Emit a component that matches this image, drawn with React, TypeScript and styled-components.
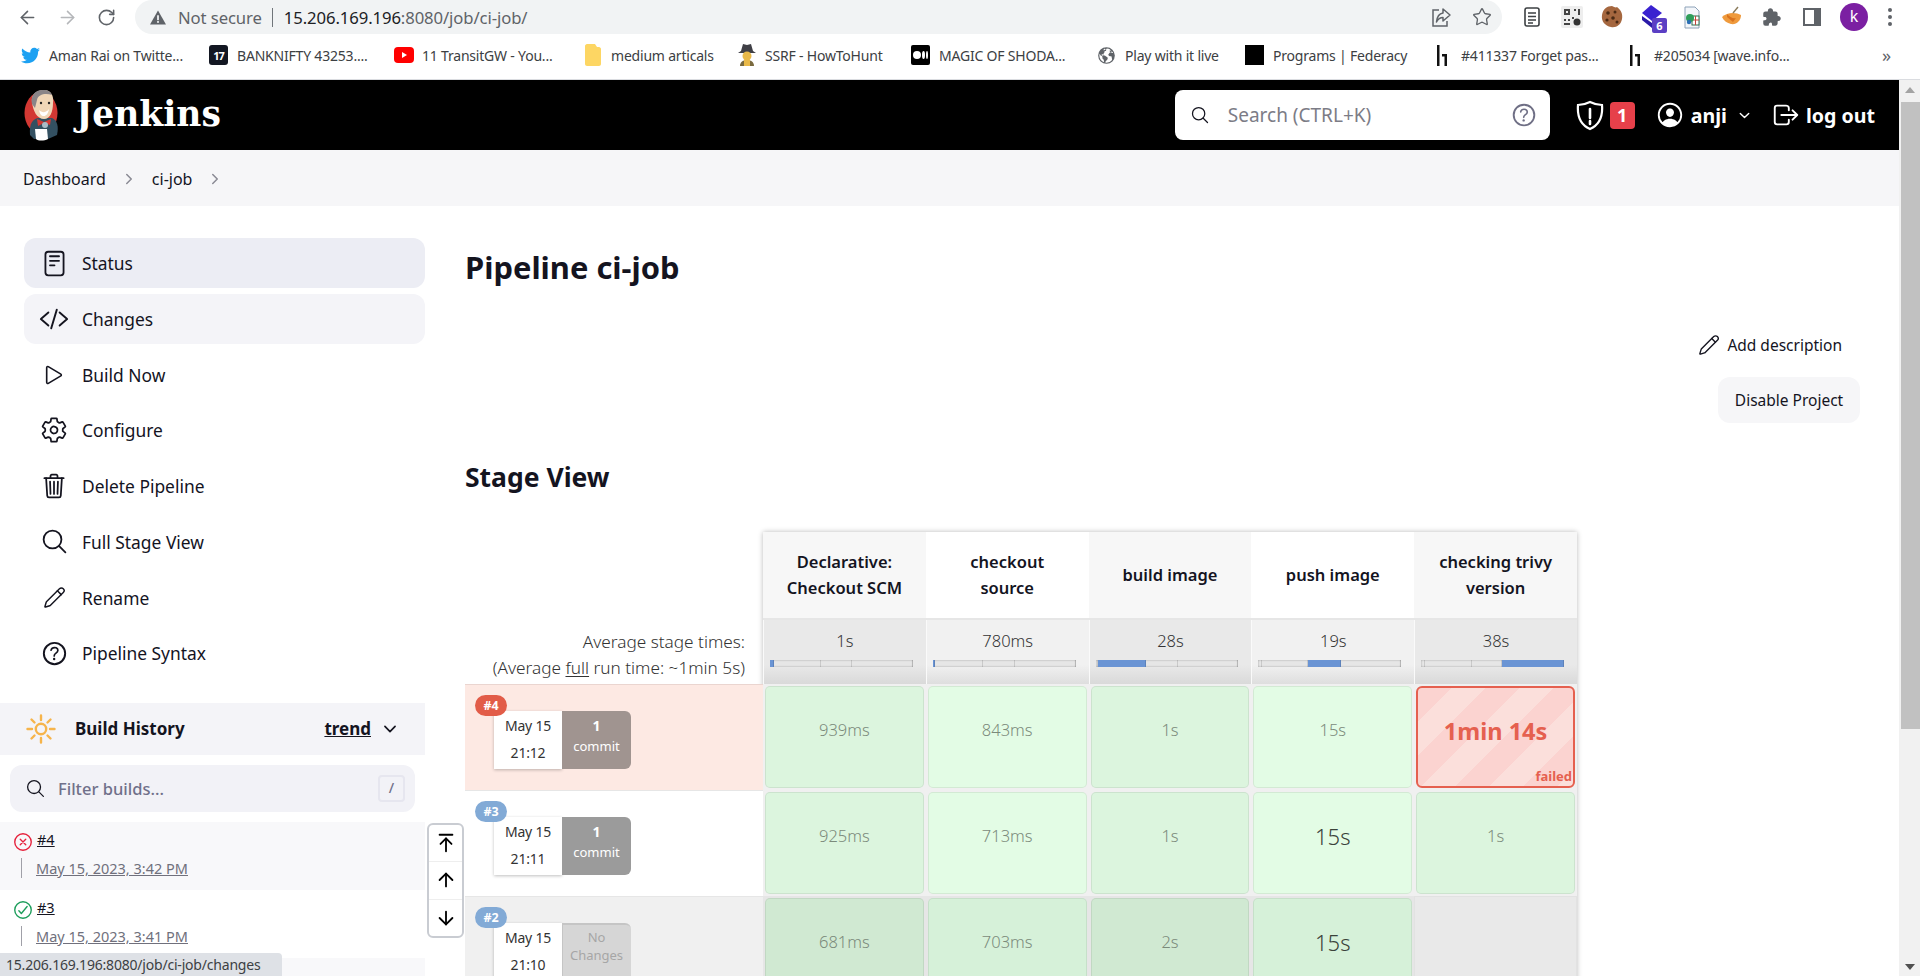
import React from "react";
import styled, { createGlobalStyle } from "styled-components";
import { ArrowDown, ArrowLeft, ArrowRight, ArrowUp, ArrowUpToLine, Pencil, RotateCw, Star } from "lucide-react";
import { FaTwitter } from "react-icons/fa";
import {
  IoCheckmarkCircleOutline,
  IoChevronDown,
  IoChevronForward,
  IoCloseCircleOutline,
  IoCodeSlashOutline,
  IoEarth,
  IoExtensionPuzzle,
  IoHelpCircleOutline,
  IoLogOutOutline,
  IoPersonCircleOutline,
  IoPlayOutline,
  IoReaderOutline,
  IoSearchOutline,
  IoSettingsOutline,
  IoTrashOutline,
} from "react-icons/io5";

const sans = `"Noto Sans", "Open Sans", Arial, sans-serif`;

const GlobalStyle = createGlobalStyle`
  html, body {
    margin: 0;
    padding: 0;
    background: #fff;
    overflow: hidden;
  }
  body {
    font-family: ${sans};
    color: #14141f;
  }
  * {
    box-sizing: border-box;
  }
  svg {
    flex: none;
  }
`;

const Screen = styled.div`
  position: relative;
  width: 1920px;
  height: 976px;
  overflow: hidden;
  display: flex;
  flex-direction: column;
`;

/* browser chrome */

const Toolbar = styled.div`
  height: 34px;
  display: flex;
  align-items: center;
  background: #fff;
  color: #5f6368;
`;

const NavButtons = styled.div`
  width: 135px;
  padding-left: 17px;
  display: flex;
  gap: 19px;
  align-items: center;
`;

const AddressBar = styled.div`
  width: 1367px;
  height: 34px;
  padding: 0 10px 0 15px;
  display: flex;
  align-items: center;
  background: #f1f3f4;
  border-radius: 17px;
  font-size: 16.7px;
  letter-spacing: -0.1px;
`;

const NotSecure = styled.span`
  margin-left: 12px;
  color: #5f6368;
`;

const AddressDivider = styled.span`
  width: 1px;
  height: 19px;
  margin: 0 11px 0 10px;
  background: #70757a;
`;

const Host = styled.span`
  color: #202124;
`;

const Path = styled.span`
  color: #5f6368;
`;

const AddressActions = styled.div`
  margin-left: auto;
  display: flex;
  align-items: center;
  gap: 20px;
`;

const Extensions = styled.div`
  flex: 1;
  padding-left: 18px;
  display: flex;
  align-items: center;
  gap: 16px;
`;

const ExtensionSlot = styled.div`
  position: relative;
  width: 24px;
  height: 24px;
  display: flex;
  align-items: center;
  justify-content: center;
`;

const CountBadge = styled.span`
  position: absolute;
  right: -3px;
  bottom: -4px;
  width: 15px;
  height: 15px;
  border-radius: 2px;
  background: #5b3fc4;
  color: #fff;
  font-size: 11px;
  font-weight: 700;
  line-height: 15px;
  text-align: center;
`;

const Avatar = styled.div`
  width: 28px;
  height: 28px;
  flex: none;
  border-radius: 50%;
  background: #7b1fa2;
  color: #fff;
  font-size: 16px;
  line-height: 27px;
  text-align: center;
`;

const Kebab = styled.div`
  margin-left: 4px;
  display: flex;
  flex-direction: column;
  gap: 3px;
`;

const KebabDot = styled.i`
  width: 4px;
  height: 4px;
  border-radius: 50%;
  background: #5f6368;
`;

const Bookmarks = styled.div`
  height: 46px;
  padding: 0 0 3px 21px;
  display: flex;
  align-items: center;
  background: #fff;
  border-bottom: 1px solid #dadce0;
  font-size: 14px;
  letter-spacing: -0.2px;
  color: #3c4043;
`;

const Bookmark = styled.div<{ $width: number }>`
  width: ${(p) => p.$width}px;
  flex: none;
  display: flex;
  align-items: center;
  gap: 9px;
  white-space: nowrap;
`;

const Fav = styled.span`
  width: 19px;
  height: 20px;
  flex: none;
  display: flex;
  align-items: center;
  justify-content: center;
`;

const TvFav = styled(Fav)`
  background: #131722;
  border-radius: 3px;
  color: #fff;
  font-size: 11px;
  font-weight: 700;
  letter-spacing: -1px;
`;

const BlackFav = styled(Fav)`
  background: #000;
`;

const MediumFav = styled(BlackFav)`
  gap: 1px;
  border-radius: 2px;
`;

const MediumDot = styled.i<{ $w: number }>`
  width: ${(p) => p.$w}px;
  height: 8px;
  border-radius: 50%;
  background: #fff;
`;

const Overflow = styled.span`
  margin-left: auto;
  padding-right: 29px;
  font-size: 18px;
  color: #5f6368;
`;

/* page */

const Viewport = styled.div`
  flex: 1;
  min-height: 0;
  display: flex;
`;

const Page = styled.div`
  width: 1899px;
  flex: none;
  display: flex;
  flex-direction: column;
`;

const Scrollbar = styled.div`
  flex: 1;
  display: flex;
  flex-direction: column;
  align-items: center;
  background: #f1f1f1;
`;

const ScrollArrow = styled.div<{ $down?: boolean }>`
  width: 0;
  height: 0;
  margin: ${(p) => (p.$down ? "auto 0 6px" : "7px 0 0")};
  border-left: 5px solid transparent;
  border-right: 5px solid transparent;
  ${(p) => (p.$down ? "border-top: 6px solid #505050;" : "border-bottom: 6px solid #a3a3a3;")}
`;

const ScrollThumb = styled.div`
  width: 19px;
  height: 627px;
  margin: 9px 0 0 2px;
  background: #c1c1c1;
`;

const Header = styled.header`
  height: 70px;
  flex: none;
  padding: 0 24px 0 24px;
  display: flex;
  align-items: center;
  background: #000;
  color: #fff;
`;

const Brand = styled.div`
  display: flex;
  align-items: center;
  gap: 15px;
  font-family: "DejaVu Serif", "Liberation Serif", serif;
  font-size: 34.5px;
  line-height: 40px;
  font-weight: 700;
`;

const BrandName = styled.span`
  margin-top: -3px;
`;

const SearchBox = styled.div`
  width: 375px;
  height: 50px;
  margin-left: auto;
  padding: 0 11px 0 15px;
  display: flex;
  align-items: center;
  gap: 18px;
  background: #fff;
  border-radius: 8px;
  color: #14141f;
`;

const SearchHint = styled.span`
  flex: 1;
  font-size: 19px;
  color: #7c7c86;
`;

const HeaderAction = styled.div<{ $gap: number; $left: number }>`
  margin-left: ${(p) => p.$left}px;
  display: flex;
  align-items: center;
  gap: ${(p) => p.$gap}px;
  font-size: 19.6px;
  font-weight: 700;
`;

const ChevronGap = styled.span`
  margin-left: 4px;
  display: flex;
`;

const AlertCount = styled.span`
  width: 25px;
  height: 27px;
  border-radius: 4px;
  background: #e6404a;
  text-align: center;
  line-height: 27px;
  font-size: 18px;
`;

const Breadcrumbs = styled.nav`
  height: 56px;
  flex: none;
  padding: 1px 0 0 23px;
  display: flex;
  align-items: center;
  gap: 15px;
  background: #f6f6f8;
  font-size: 16px;
  color: #14141f;
`;

const Crumb = styled.span`
  white-space: nowrap;
`;

const CrumbArrow = styled.span`
  display: flex;
  color: #8a8a94;
`;

const Body = styled.div`
  flex: 1;
  min-height: 0;
  display: flex;
`;

const Side = styled.aside`
  width: 425px;
  flex: none;
  padding-top: 32px;
`;

const Tasks = styled.div`
  padding-left: 24px;
  display: flex;
  flex-direction: column;
  gap: 5.75px;
`;

const Task = styled.div<{ $state?: "active" | "hover" }>`
  height: 50px;
  padding-left: 17px;
  display: flex;
  align-items: center;
  gap: 15px;
  border-radius: 12px;
  background: ${(p) =>
    p.$state === "active" ? "#ecedf4" : p.$state === "hover" ? "#f4f4f8" : "transparent"};
  font-size: 17.4px;
  color: #14141f;
`;

const TaskIcon = styled.span`
  width: 26px;
  height: 26px;
  flex: none;
  display: flex;
  align-items: center;
  justify-content: center;
`;

const HistoryHead = styled.div`
  height: 52px;
  margin-top: 24.5px;
  padding: 0 26px;
  display: flex;
  align-items: center;
  background: #f4f4f8;
  font-size: 17px;
  font-weight: 700;
`;

const HistoryTitle = styled.span`
  margin-left: 19px;
`;

const Trend = styled.span`
  margin-left: auto;
  margin-right: 10px;
  text-decoration: underline;
`;

const Filter = styled.div`
  height: 47px;
  margin: 10px 10px 10px;
  padding: 0 10px 0 15px;
  display: flex;
  align-items: center;
  gap: 12px;
  background: #f2f2f7;
  border-radius: 12px;
  font-size: 16.5px;
  font-weight: 500;
  color: #70708a;
`;

const FilterKey = styled.span`
  width: 27px;
  height: 27px;
  margin-left: auto;
  border: 2px solid #e6e6ef;
  border-radius: 4px;
  text-align: center;
  font-size: 14px;
  line-height: 22px;
`;

const BuildRow = styled.div<{ $shaded?: boolean }>`
  height: 68px;
  padding: 8px 0 0 12px;
  background: ${(p) => (p.$shaded ? "#f8f8fa" : "#fff")};
`;

const BuildName = styled.div`
  display: flex;
  align-items: center;
  gap: 3px;
  height: 24px;
  font-size: 14.5px;
`;

const BuildLink = styled.span`
  margin-top: -6px;
  text-decoration: underline;
`;

const BuildDate = styled.div`
  margin: 4px 0 0 9px;
  padding-left: 14px;
  border-left: 1px solid #a0a0a8;
  height: 20px;
  line-height: 20px;
  font-size: 14.5px;
  color: #70707c;
  text-decoration: underline;
`;

const Main = styled.main`
  flex: 1;
  min-width: 0;
  padding: 38px 39px 0 40px;
`;

const Title = styled.h1`
  margin: 0;
  font-size: 30.9px;
  line-height: 46px;
  font-weight: 700;
`;

const Actions = styled.div`
  margin-top: 39px;
  display: flex;
  flex-direction: column;
  align-items: flex-end;
  gap: 16px;
  font-size: 15.5px;
`;

const AddDescription = styled.div`
  height: 32px;
  margin-right: 18px;
  display: flex;
  align-items: center;
  gap: 7px;
`;

const DisableButton = styled.div`
  width: 142px;
  height: 46px;
  display: flex;
  align-items: center;
  justify-content: center;
  background: #f6f6f8;
  border-radius: 12px;
`;

const SectionTitle = styled.h2`
  margin: 35px 0 0;
  font-size: 26.5px;
  line-height: 38px;
  font-weight: 700;
`;

/* stage view */

const StageView = styled.div`
  margin-top: 36px;
  display: flex;
`;

const BuildColumn = styled.div`
  width: 298px;
  flex: none;
`;

const StageSpacer = styled.div`
  height: 88px;
`;

const AverageLabel = styled.div`
  height: 64px;
  padding: 9px 18px 0 0;
  text-align: right;
  font-size: 17.2px;
  line-height: 26px;
  font-weight: 300;
  color: #333;
  white-space: nowrap;

  u {
    text-underline-offset: 2px;
  }
`;

const RunLabel = styled.div<{ $tone: "failed" | "ok" | "alt" }>`
  position: relative;
  height: 106px;
  padding: 26px 0 0 29px;
  display: flex;
  background: ${(p) => (p.$tone === "failed" ? "#fde9e3" : p.$tone === "alt" ? "#f0f0f0" : "#fff")};
  border-top: 1px solid ${(p) => (p.$tone === "failed" ? "#ead5d0" : "#e6e6e6")};
`;

const RunBadge = styled.span<{ $failed?: boolean }>`
  position: absolute;
  left: 10px;
  top: 10px;
  width: 32px;
  height: 21px;
  border-radius: 11px;
  background: ${(p) => (p.$failed ? "#e25c48" : "#82aad6")};
  color: #fff;
  font-size: 12.5px;
  font-weight: 700;
  line-height: 21px;
  text-align: center;
`;

const RunDate = styled.div`
  width: 68px;
  height: 58px;
  background: #fff;
  box-shadow: 0 1px 3px rgba(0, 0, 0, 0.25);
  text-align: center;
  font-size: 14px;
  line-height: 27px;
  padding-top: 1px;
  letter-spacing: -0.2px;
  color: #333;
`;

const RunCommits = styled.div<{ $bg: string; $muted?: boolean }>`
  width: 69px;
  height: 58px;
  padding-top: ${(p) => (p.$muted ? "5px" : "4px")};
  background: ${(p) => p.$bg};
  border-radius: 0 6px 6px 0;
  text-align: center;
  font-size: 13px;
  line-height: ${(p) => (p.$muted ? "18px" : "21px")};
  color: ${(p) => (p.$muted ? "#a6a6a6" : "#fff")};
  ${(p) => p.$muted && "box-shadow: inset 1px 2px 0 rgba(0, 0, 0, 0.08);"}

  b {
    display: block;
    font-size: 14px;
  }
`;

const StageGrid = styled.div`
  width: 814px;
  flex: none;
  display: grid;
  grid-template-columns: repeat(5, 162.8px);
  grid-template-rows: 88px 64px repeat(3, 106px);
  box-shadow: 0 0 5px rgba(0, 0, 0, 0.28);
`;

const StageHead = styled.div<{ $odd: boolean }>`
  display: flex;
  align-items: center;
  justify-content: center;
  padding: 0 18px;
  background: ${(p) => (p.$odd ? "#f7f7f7" : "#fff")};
  border-bottom: 2px solid #e6e6e6;
  text-align: center;
  font-size: 16.5px;
  line-height: 26px;
  font-weight: 600;
`;

const StageAverage = styled.div<{ $odd: boolean }>`
  padding-top: 9px;
  background: linear-gradient(
    to bottom,
    ${(p) => (p.$odd ? "#e9e9e9" : "#f1f1f1")} 70%,
    ${(p) => (p.$odd ? "#d9d9d9" : "#dedede")}
  );
  border-left: 1px solid #fafafa;
  text-align: center;
  font-size: 16.5px;
  line-height: 24px;
  font-weight: 300;
  color: #333;
`;

const Bar = styled.div`
  height: 7px;
  margin: 7px 13px 0 6px;
  display: flex;
  overflow: hidden;
  background: #e6e6e6;
  box-shadow: inset 0 0 2px rgba(0, 0, 0, 0.35);
`;

const BarPart = styled.div<{ $active: boolean; $grow: number }>`
  flex: ${(p) => p.$grow} 0 0;
  min-width: 1px;
  background: ${(p) => (p.$active ? "#6a94d4" : "transparent")};
  border-right: 1px solid rgba(0, 0, 0, 0.12);
`;

const StageCell = styled.div<{ $tone: "failed" | "ok" | "alt" }>`
  background: ${(p) => (p.$tone === "alt" ? "#e6e6e6" : "#f0f0f0")};
  padding: 2px;
  display: flex;
`;

const EmptyCell = styled.div`
  background: #e9e9e9;
  border: 1px solid #e2e2e2;
`;

const CellBody = styled.div<{ $big?: boolean; $bg: string }>`
  flex: 1;
  padding-top: 28px;
  background: ${(p) => p.$bg};
  border: 1px solid rgba(0, 0, 0, 0.07);
  border-radius: 5px;
  text-align: center;
  font-size: ${(p) => (p.$big ? "22px" : "16.5px")};
  line-height: 30px;
  font-weight: 300;
  color: ${(p) => (p.$big ? "#3a423a" : "#7b8a7b")};
`;

const FailedCell = styled.div`
  position: relative;
  flex: 1;
  padding-top: 28px;
  border: 2px solid #e5604f;
  border-radius: 6px;
  background: repeating-linear-gradient(135deg, #fbd3d0 0 24px, #fbdfdb 24px 48px);
  text-align: center;
  font-size: 23.5px;
  line-height: 30px;
  font-weight: 700;
  color: #e5604f;
`;

const FailedTag = styled.span`
  position: absolute;
  right: 1px;
  bottom: 2px;
  font-size: 13px;
  line-height: 16px;
`;

/* overlays */

const StageNav = styled.div`
  position: absolute;
  left: 427px;
  top: 823px;
  width: 37px;
  height: 115px;
  display: flex;
  flex-direction: column;
  background: #fff;
  border: 2px solid #c9ccd2;
  border-radius: 6px;
  color: #000;
`;

const StageNavButton = styled.div`
  flex: 1;
  display: flex;
  align-items: center;
  justify-content: center;
  border-bottom: 1px solid #eeeeee;

  &:last-child {
    border-bottom: none;
  }
`;

const LinkPreview = styled.div`
  position: absolute;
  left: 0;
  bottom: 0;
  width: 282px;
  height: 23px;
  padding-left: 6px;
  background: #dee1e6;
  border-top-right-radius: 4px;
  font-size: 14px;
  line-height: 23px;
  letter-spacing: -0.2px;
  color: #3c4043;
  white-space: nowrap;
`;

/* drawn icons and logos */

const JenkinsLogo = () => (
  <svg width="37" height="52" viewBox="0 0 37 52">
    <ellipse cx="17" cy="24" rx="16.5" ry="21" fill="#d33833" />
    <path d="M6 46 C5 34 9 30 14 29 L28 29 C33 31 35 37 33 46 L24 50 L10 50Z" fill="#335061" />
    <path d="M8 13 C7 5 13 1 20 1 C27 1 30 7 29 14 C29 23 26 30 20 30 C13 30 9 22 8 13Z" fill="#f0d6b7" />
    <path d="M8 15 C6 6 12 0 20 1 C24 1 27 3 28 6 C22 4 14 5 13 11 L11 19Z" fill="#8a8588" />
    <path d="M15 21 C18 24 22 24 25 20 C24 25 22 27 20 27 C17 27 16 25 15 21Z" fill="#fff" />
    <circle cx="17" cy="14" r="1.2" fill="#222" />
    <circle cx="25" cy="14" r="1.2" fill="#222" />
    <path d="M13 30 L20 33 L27 30 L26 36 L20 34 L14 37Z" fill="#d33833" />
    <path d="M11 40 L23 40 L24 50 C20 52 14 52 12 50Z" fill="#fff" />
    <circle cx="21" cy="36" r="3" fill="#a9bcc8" />
  </svg>
);

const ShieldIcon = () => (
  <svg width="28" height="31" viewBox="0 0 28 31" fill="none" stroke="#fff" strokeWidth="2.2">
    <path d="M14 2 C18 4 22 5 26 5 C27 17 23 25 14 29 C5 25 1 17 2 5 C6 5 10 4 14 2Z" />
    <path d="M14 9 V18 M14 21 V24" strokeLinecap="round" strokeWidth="2.6" />
  </svg>
);

const SunIcon = () => (
  <svg width="30" height="30" viewBox="0 0 30 30" fill="none" stroke="#f6b44b" strokeWidth="2.4" strokeLinecap="round">
    <circle cx="15" cy="15" r="5.2" />
    <path d="M15 1.5 V6 M15 24 V28.5 M1.5 15 H6 M24 15 H28.5 M5.5 5.5 L8.5 8.5 M21.5 21.5 L24.5 24.5 M24.5 5.5 L21.5 8.5 M8.5 21.5 L5.5 24.5" />
  </svg>
);

const ShareIcon = () => (
  <svg width="21" height="21" viewBox="0 0 21 21" fill="none" stroke="#5f6368" strokeWidth="1.5">
    <path d="M8 3 H2 V19 H16 V14" />
    <path d="M12 2 L19 8 L12 14 V10.5 C9 10.5 7 12 5.5 15 C6 10 8 6.5 12 6Z" strokeLinejoin="round" />
  </svg>
);

const ReaderIcon = () => (
  <svg width="16" height="20" viewBox="0 0 16 20" fill="none" stroke="#3c4043" strokeWidth="1.6">
    <rect x="1" y="1" width="14" height="18" rx="2" />
    <path d="M4 6 H12 M4 9.5 H12 M4 13 H12 M4 16 H9" strokeWidth="1.3" />
  </svg>
);

const QrIcon = () => (
  <svg width="22" height="22" viewBox="0 0 22 22">
    <rect width="22" height="22" rx="2" fill="#eeeeee" />
    <path
      d="M3 3 H9 V9 H3Z M5 5 V7 H7 V5Z M13 3 H15 V5 H13Z M17 3 H19 V9 H17Z M3 13 H5 V15 H3Z M7 13 H9 V15 H7Z M3 17 H9 V19 H3Z M11 11 H13 V13 H11Z"
      fill="#444"
      fillRule="evenodd"
    />
    <circle cx="16" cy="16" r="3.5" fill="#333" />
  </svg>
);

const CookieIcon = () => (
  <svg width="22" height="24" viewBox="0 0 22 24">
    <path d="M11 1 C13 2 15 3 16 2 C20 5 22 9 21 14 C20 20 15 23 10 22 C4 21 0 16 1 10 C2 4 6 1 11 1Z" fill="#a5673f" />
    <circle cx="7" cy="8" r="1.8" fill="#4a2a14" />
    <circle cx="14" cy="7" r="1.5" fill="#4a2a14" />
    <circle cx="12" cy="13" r="1.8" fill="#4a2a14" />
    <circle cx="6" cy="15" r="1.6" fill="#4a2a14" />
    <circle cx="16" cy="17" r="1.5" fill="#4a2a14" />
  </svg>
);

const StackIcon = () => (
  <svg width="22" height="24" viewBox="0 0 22 24">
    <path d="M1 11 L11 18 L15 15 V22 L11 23 L1 15Z" fill="#2a1aa8" />
    <path d="M10 0 L21 8 L11 16 L1 8Z" fill="#3a22d0" />
  </svg>
);

const SheetIcon = () => (
  <svg width="18" height="23" viewBox="0 0 18 23">
    <path d="M2 1 H12 L16 5 V22 H2Z" fill="#f3f6fa" stroke="#8da2b8" />
    <rect x="9" y="10" width="7" height="9" fill="#fff" stroke="#2d6e4e" />
    <path d="M9 14 H16 M12.5 10 V19" stroke="#c2453c" />
    <circle cx="7" cy="12" r="4" fill="#2f9e5a" />
    <circle cx="6" cy="16" r="2.2" fill="#2b6fb5" />
  </svg>
);

const OrangeIcon = () => (
  <svg width="22" height="22" viewBox="0 0 22 22">
    <path d="M1 11 C6 6 15 6 20 9 C20 15 15 19 10 18 C6 17 3 15 1 11Z" fill="#ef9a3c" />
    <path d="M6 8 C9 11 12 13 15 12 L12 16 L6 11Z" fill="#d9731f" />
    <path d="M12 7 L17 1" stroke="#8a7a5a" strokeWidth="1.4" />
  </svg>
);

const SidePanelIcon = () => (
  <svg width="18" height="18" viewBox="0 0 18 18">
    <path d="M1 1 H17 V17 H1Z" fill="none" stroke="#5f6368" strokeWidth="2" />
    <rect x="11" y="1" width="6" height="16" fill="#5f6368" />
  </svg>
);

const FolderFav = () => (
  <svg width="16" height="22" viewBox="0 0 16 22">
    <path d="M0 2 C0 1 1 0 2 0 H10 L12 3 H14 C15 3 16 4 16 5 V20 C16 21 15 22 14 22 H2 C1 22 0 21 0 20Z" fill="#fdd663" />
  </svg>
);

const YoutubeFav = () => (
  <svg width="20" height="16" viewBox="0 0 20 16">
    <rect width="20" height="16" rx="4" fill="#f00" />
    <path d="M8 5 L13 8 L8 11Z" fill="#fff" />
  </svg>
);

const SpyFav = () => (
  <svg width="20" height="24" viewBox="0 0 20 24">
    <path d="M4 8 L6 1 L10 2 L14 1 L16 8 L19 10 H1Z" fill="#3f3f46" />
    <circle cx="10" cy="13" r="4.5" fill="#e9b949" />
    <path d="M3 23 C3 19 6 17 10 17 C14 17 17 19 17 23Z" fill="#7a6a3f" />
    <rect x="7" y="17" width="6" height="6" fill="#e9b949" />
  </svg>
);

const HackerOneFav = () => (
  <svg width="12" height="21" viewBox="0 0 12 21" fill="#111">
    <rect x="0" y="0" width="2.5" height="21" />
    <path d="M5 9 H10 V21 H7.5 V11.5 H5Z" />
  </svg>
);

/* page data */

const bookmarks = [
  { w: 188, icon: <Fav><FaTwitter size={19} color="#1da1f2" /></Fav>, label: "Aman Rai on Twitte..." },
  { w: 185, icon: <TvFav>17</TvFav>, label: "BANKNIFTY 43253...." },
  { w: 189, icon: <Fav><YoutubeFav /></Fav>, label: "11 TransitGW - You..." },
  { w: 154, icon: <Fav><FolderFav /></Fav>, label: "medium articals" },
  { w: 174, icon: <Fav><SpyFav /></Fav>, label: "SSRF - HowToHunt" },
  {
    w: 186,
    icon: (
      <MediumFav>
        <MediumDot $w={8} />
        <MediumDot $w={3} />
        <MediumDot $w={2} />
      </MediumFav>
    ),
    label: "MAGIC OF SHODA...",
  },
  { w: 148, icon: <Fav><IoEarth size={19} color="#5f6368" /></Fav>, label: "Play with it live" },
  { w: 188, icon: <BlackFav />, label: "Programs | Federacy" },
  { w: 193, icon: <Fav><HackerOneFav /></Fav>, label: "#411337 Forget pas..." },
  { w: 170, icon: <Fav><HackerOneFav /></Fav>, label: "#205034 [wave.info..." },
];

const tasks = [
  { label: "Status", icon: <IoReaderOutline size={29} />, state: "active" as const },
  { label: "Changes", icon: <IoCodeSlashOutline size={30} />, state: "hover" as const },
  { label: "Build Now", icon: <IoPlayOutline size={26} /> },
  { label: "Configure", icon: <IoSettingsOutline size={28} /> },
  { label: "Delete Pipeline", icon: <IoTrashOutline size={28} /> },
  { label: "Full Stage View", icon: <IoSearchOutline size={29} /> },
  { label: "Rename", icon: <Pencil size={23} strokeWidth={1.5} /> },
  { label: "Pipeline Syntax", icon: <IoHelpCircleOutline size={31} /> },
];

const stages = [
  { name: "Declarative: Checkout SCM", avg: "1s", bar: [[2, 1], [33, 0], [22, 0], [43, 0]] },
  { name: "checkout source", avg: "780ms", bar: [[1, 1], [34, 0], [22, 0], [43, 0]] },
  { name: "build image", avg: "28s", bar: [[1, 0], [34, 1], [22, 0], [43, 0]] },
  { name: "push image", avg: "19s", bar: [[2, 0], [32, 0], [23, 1], [43, 0]] },
  { name: "checking trivy version", avg: "38s", bar: [[2, 0], [33, 0], [21, 0], [44, 1]] },
];

type StageRun = { time: string; big?: boolean; failed?: boolean } | null;

const runs: {
  id: string;
  tone: "failed" | "ok" | "alt";
  date: string;
  clock: string;
  commitBg: string;
  commitTop: string;
  commitBottom: string;
  muted?: boolean;
  colors: [string, string];
  cells: StageRun[];
}[] = [
  {
    id: "#4",
    tone: "failed",
    date: "May 15",
    clock: "21:12",
    commitBg: "#a09490",
    commitTop: "1",
    commitBottom: "commit",
    colors: ["#dcf5de", "#e3fce5"],
    cells: [{ time: "939ms" }, { time: "843ms" }, { time: "1s" }, { time: "15s" }, { time: "1min 14s", failed: true }],
  },
  {
    id: "#3",
    tone: "ok",
    date: "May 15",
    clock: "21:11",
    commitBg: "#9b9b9b",
    commitTop: "1",
    commitBottom: "commit",
    colors: ["#dcf5de", "#e3fce5"],
    cells: [{ time: "925ms" }, { time: "713ms" }, { time: "1s" }, { time: "15s", big: true }, { time: "1s" }],
  },
  {
    id: "#2",
    tone: "alt",
    date: "May 15",
    clock: "21:10",
    commitBg: "#d6d6d6",
    commitTop: "No",
    commitBottom: "Changes",
    muted: true,
    colors: ["#d0e9d2", "#d6f1d9"],
    cells: [{ time: "681ms" }, { time: "703ms" }, { time: "2s" }, { time: "15s", big: true }, null],
  },
];

const builds = [
  { id: "#4", date: "May 15, 2023, 3:42 PM", failed: true },
  { id: "#3", date: "May 15, 2023, 3:41 PM" },
];

const App = () => {
  return (
    <Screen>
      <GlobalStyle />
      <Toolbar>
        <NavButtons>
          <ArrowLeft size={21} strokeWidth={1.8} />
          <ArrowRight size={21} strokeWidth={1.8} color="#b5b7ba" />
          <RotateCw size={19} strokeWidth={2} />
        </NavButtons>
        <AddressBar>
          <svg width="16" height="15" viewBox="0 0 18 16">
            <path d="M9 0 L18 16 H0Z" fill="#5f6368" />
            <rect x="8" y="5.5" width="2" height="5.5" fill="#f1f3f4" />
            <rect x="8" y="12" width="2" height="2" fill="#f1f3f4" />
          </svg>
          <NotSecure>Not secure</NotSecure>
          <AddressDivider />
          <Host>15.206.169.196</Host>
          <Path>:8080/job/ci-job/</Path>
          <AddressActions>
            <ShareIcon />
            <Star size={20} strokeWidth={1.6} />
          </AddressActions>
        </AddressBar>
        <Extensions>
          <ExtensionSlot><ReaderIcon /></ExtensionSlot>
          <ExtensionSlot><QrIcon /></ExtensionSlot>
          <ExtensionSlot><CookieIcon /></ExtensionSlot>
          <ExtensionSlot>
            <StackIcon />
            <CountBadge>6</CountBadge>
          </ExtensionSlot>
          <ExtensionSlot><SheetIcon /></ExtensionSlot>
          <ExtensionSlot><OrangeIcon /></ExtensionSlot>
          <ExtensionSlot><IoExtensionPuzzle size={20} color="#5f6368" /></ExtensionSlot>
          <ExtensionSlot><SidePanelIcon /></ExtensionSlot>
          <Avatar>k</Avatar>
          <Kebab>
            <KebabDot />
            <KebabDot />
            <KebabDot />
          </Kebab>
        </Extensions>
      </Toolbar>
      <Bookmarks>
        {bookmarks.map((b) => (
          <Bookmark key={b.label} $width={b.w}>
            {b.icon}
            {b.label}
          </Bookmark>
        ))}
        <Overflow>»</Overflow>
      </Bookmarks>
      <Viewport>
        <Page>
          <Header>
            <Brand>
              <JenkinsLogo />
              <BrandName>Jenkins</BrandName>
            </Brand>
            <SearchBox>
              <IoSearchOutline size={20} />
              <SearchHint>Search (CTRL+K)</SearchHint>
              <IoHelpCircleOutline size={30} color="#6f6f85" />
            </SearchBox>
            <HeaderAction $gap={6} $left={26}>
              <ShieldIcon />
              <AlertCount>1</AlertCount>
            </HeaderAction>
            <HeaderAction $gap={6} $left={20}>
              <IoPersonCircleOutline size={30} />
              anji
              <ChevronGap><IoChevronDown size={15} /></ChevronGap>
            </HeaderAction>
            <HeaderAction $gap={5} $left={19}>
              <IoLogOutOutline size={30} />
              log out
            </HeaderAction>
          </Header>
          <Breadcrumbs>
            <Crumb>Dashboard</Crumb>
            <CrumbArrow><IoChevronForward size={16} /></CrumbArrow>
            <Crumb>ci-job</Crumb>
            <CrumbArrow><IoChevronForward size={16} /></CrumbArrow>
          </Breadcrumbs>
          <Body>
            <Side>
              <Tasks>
                {tasks.map((t) => (
                  <Task key={t.label} $state={t.state}>
                    <TaskIcon>{t.icon}</TaskIcon>
                    {t.label}
                  </Task>
                ))}
              </Tasks>
              <HistoryHead>
                <SunIcon />
                <HistoryTitle>Build History</HistoryTitle>
                <Trend>trend</Trend>
                <IoChevronDown size={18} />
              </HistoryHead>
              <Filter>
                <IoSearchOutline size={21} color="#14141f" />
                Filter builds...
                <FilterKey>/</FilterKey>
              </Filter>
              {builds.map((b, i) => (
                <BuildRow key={b.id} $shaded={i === 0}>
                  <BuildName>
                    {b.failed ? (
                      <IoCloseCircleOutline size={22} color="#e6223c" />
                    ) : (
                      <IoCheckmarkCircleOutline size={22} color="#1e9e5c" />
                    )}
                    <BuildLink>{b.id}</BuildLink>
                  </BuildName>
                  <BuildDate>{b.date}</BuildDate>
                </BuildRow>
              ))}
              <BuildRow $shaded />
            </Side>
            <Main>
              <Title>Pipeline ci-job</Title>
              <Actions>
                <AddDescription>
                  <Pencil size={22} strokeWidth={1.5} />
                  Add description
                </AddDescription>
                <DisableButton>Disable Project</DisableButton>
              </Actions>
              <SectionTitle>Stage View</SectionTitle>
              <StageView>
                <BuildColumn>
                  <StageSpacer />
                  <AverageLabel>
                    Average stage times:
                    <br />
                    (Average <u>full</u> run time: ~1min 5s)
                  </AverageLabel>
                  {runs.map((r) => (
                    <RunLabel key={r.id} $tone={r.tone}>
                      <RunBadge $failed={r.tone === "failed"}>{r.id}</RunBadge>
                      <RunDate>
                        {r.date}
                        <br />
                        {r.clock}
                      </RunDate>
                      <RunCommits $bg={r.commitBg} $muted={r.muted}>
                        {r.muted ? r.commitTop : <b>{r.commitTop}</b>}
                        {r.muted && <br />}
                        {r.commitBottom}
                      </RunCommits>
                    </RunLabel>
                  ))}
                </BuildColumn>
                <StageGrid>
                  {stages.map((s, i) => (
                    <StageHead key={s.name} $odd={i % 2 === 0}>{s.name}</StageHead>
                  ))}
                  {stages.map((s, i) => (
                    <StageAverage key={s.name} $odd={i % 2 === 0}>
                      {s.avg}
                      <Bar>
                        {s.bar.map(([grow, active], j) => (
                          <BarPart key={j} $grow={grow} $active={active === 1} />
                        ))}
                      </Bar>
                    </StageAverage>
                  ))}
                  {runs.map((r) =>
                    r.cells.map((c, i) =>
                      c ? (
                        <StageCell key={r.id + i} $tone={r.tone}>
                          {c.failed ? (
                            <FailedCell>
                              {c.time}
                              <FailedTag>failed</FailedTag>
                            </FailedCell>
                          ) : (
                            <CellBody $big={c.big} $bg={r.colors[i % 2]}>{c.time}</CellBody>
                          )}
                        </StageCell>
                      ) : (
                        <EmptyCell key={r.id + i} />
                      )
                    )
                  )}
                </StageGrid>
              </StageView>
            </Main>
          </Body>
        </Page>
        <Scrollbar>
          <ScrollArrow />
          <ScrollThumb />
          <ScrollArrow $down />
        </Scrollbar>
      </Viewport>
      <StageNav>
        <StageNavButton><ArrowUpToLine size={22} strokeWidth={2} /></StageNavButton>
        <StageNavButton><ArrowUp size={22} strokeWidth={2} /></StageNavButton>
        <StageNavButton><ArrowDown size={22} strokeWidth={2} /></StageNavButton>
      </StageNav>
      <LinkPreview>15.206.169.196:8080/job/ci-job/changes</LinkPreview>
    </Screen>
  );
};

export default App;
